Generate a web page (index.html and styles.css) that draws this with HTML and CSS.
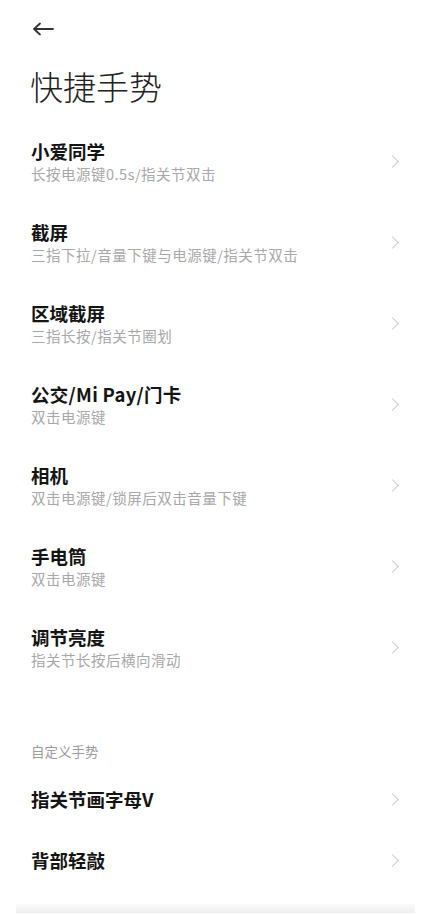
FILE: index.html
```html
<!DOCTYPE html>
<html lang="zh-CN">

<head>
  <meta charset="UTF-8">
  <meta name="viewport" content="width=device-width, initial-scale=1.0">
  <title>快捷手势</title>
  <link rel="stylesheet" href="styles.css">
</head>

<body>
  <div id="page">
    <header class="top">
      <button class="back-btn" aria-label="返回">
        <svg width="22" height="14" viewBox="0 0 22 14">
          <path d="M21 7H2.5M8 1.5L2 7l6 5.5" fill="none" stroke="#333" stroke-width="1.8" stroke-linecap="round" stroke-linejoin="round" />
        </svg>
      </button>
      <h1 class="page-title">快捷手势</h1>
    </header>

    <ul class="list">
      <li class="item">
        <div class="item-text">
          <div class="item-title">小爱同学</div>
          <div class="item-sub">长按电源键0.5s/指关节双击</div>
        </div>
        <span class="chevron"></span>
      </li>
      <li class="item">
        <div class="item-text">
          <div class="item-title">截屏</div>
          <div class="item-sub">三指下拉/音量下键与电源键/指关节双击</div>
        </div>
        <span class="chevron"></span>
      </li>
      <li class="item">
        <div class="item-text">
          <div class="item-title">区域截屏</div>
          <div class="item-sub">三指长按/指关节圈划</div>
        </div>
        <span class="chevron"></span>
      </li>
      <li class="item">
        <div class="item-text">
          <div class="item-title item-title-latin">公交/Mi Pay/门卡</div>
          <div class="item-sub">双击电源键</div>
        </div>
        <span class="chevron"></span>
      </li>
      <li class="item">
        <div class="item-text">
          <div class="item-title">相机</div>
          <div class="item-sub">双击电源键/锁屏后双击音量下键</div>
        </div>
        <span class="chevron"></span>
      </li>
      <li class="item">
        <div class="item-text">
          <div class="item-title">手电筒</div>
          <div class="item-sub">双击电源键</div>
        </div>
        <span class="chevron"></span>
      </li>
      <li class="item">
        <div class="item-text">
          <div class="item-title">调节亮度</div>
          <div class="item-sub">指关节长按后横向滑动</div>
        </div>
        <span class="chevron"></span>
      </li>
    </ul>

    <!-- 自定义 -->
    <div class="section-label">自定义手势</div>
    <ul class="list">
      <li class="item item-single">
        <div class="item-title">指关节画字母V</div>
        <span class="chevron"></span>
      </li>
      <li class="item item-single">
        <div class="item-title">背部轻敲</div>
        <span class="chevron"></span>
      </li>
    </ul>

    <div class="bottom-bar"></div>
  </div>
</body>

</html>
```

FILE: styles.css
```css
/* reset */
* {
  box-sizing: border-box;
}

html,
body,
ul,
li,
h1,
button {
  margin: 0;
  padding: 0;
  list-style: none;
}

/* style */
body {
  width: 431px;
  height: 914px;
  overflow: hidden;
  background-color: #fff;
  font-family: "Noto Sans CJK SC", "Noto Sans", sans-serif;
  color: #111;
}

#page {
  display: flex;
  flex-direction: column;
}

.top {
  height: 121px;
  padding: 22px 30px 0;
}

.back-btn {
  display: block;
  width: 24px;
  height: 14px;
  margin-left: 2px;
  border: 0;
  background: none;
}

.back-btn svg {
  display: block;
}

.page-title {
  margin-top: 27px;
  font-size: 33px;
  line-height: 46px;
  font-weight: 300;
  color: #222;
}

.item {
  display: flex;
  align-items: center;
  justify-content: space-between;
  height: 81px;
  padding: 0 31px;
}

.item-single {
  height: 61px;
}

.item-text {
  display: flex;
  flex-direction: column;
}

.item-title {
  font-size: 18.5px;
  line-height: 23px;
  font-weight: 700;
  color: #141414;
}

.item-title-latin {
  letter-spacing: 0.3px;
}

.item-sub {
  font-size: 14.5px;
  line-height: 21px;
  letter-spacing: 0.5px;
  color: #a8a8a8;
}

.chevron {
  width: 9px;
  height: 9px;
  margin-right: 3px;
  border-top: 1.5px solid #c8c8c8;
  border-right: 1.5px solid #c8c8c8;
  transform: rotate(45deg);
}

.section-label {
  padding: 54px 31px 8px;
  font-size: 13.5px;
  line-height: 19px;
  color: #9c9c9c;
}

.bottom-bar {
  height: 9px;
  margin: 13px 16px 0;
  background: linear-gradient(#fafafa, #efefef);
}
```
